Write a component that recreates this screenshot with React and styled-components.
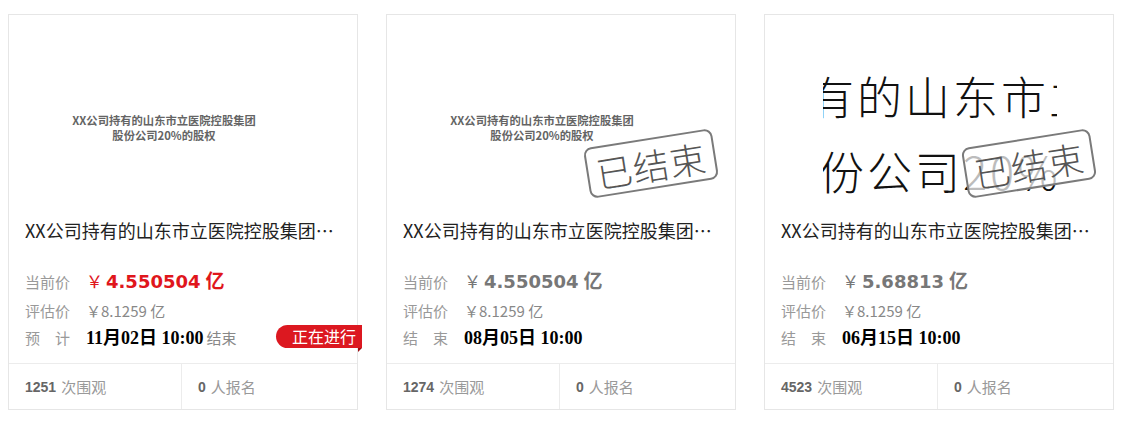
import React from "react";
import styled, { createGlobalStyle } from "styled-components";

const Global = createGlobalStyle`
  html, body { margin: 0; padding: 0; background: #fff; }
  body { font-family: "Noto Sans CJK SC", "Liberation Sans", sans-serif; }
`;

const Row = styled.div`
  display: flex;
  gap: 28px;
  padding: 14px 8px;
`;

const Card = styled.div`
  position: relative;
  width: 350px;
  height: 396px;
  box-sizing: border-box;
  border: 1px solid #e6e6e6;
  display: flex;
  flex-direction: column;
  background: #fff;
`;

const Thumb = styled.div`
  position: relative;
  height: 186px;
  overflow: hidden;
  display: flex;
  align-items: center;
  justify-content: center;
`;

const ThumbCaption = styled.div`
  margin-right: 38px;
  margin-top: 42px;
  text-align: center;
  font-size: 11.3px;
  line-height: 15px;
  font-weight: 700;
  color: #4a4a4a;
  opacity: 0.85;
`;

const ZoomView = styled.div`
  align-self: stretch;
  margin: 0 auto 0 58px;
  width: 234px;
  flex: none;
  overflow: hidden;
  display: flex;
  flex-direction: column;
  gap: 22px;
  padding-top: 54px;
  box-sizing: border-box;
  font-size: 45px;
  line-height: 53px;
  font-weight: 300;
  color: #111;
  letter-spacing: 3px;
  white-space: nowrap;
`;

const ZoomLine = styled.div`
  margin-left: ${(p) => p.$shift}px;
`;

const Stamp = styled.div`
  position: absolute;
  left: 199px;
  top: 123px;
  width: 126px;
  height: 47px;
  border: 2px solid #7a7a7a;
  border-radius: 8px;
  background: rgba(255, 255, 255, 0.72);
  transform: rotate(-9deg);
  display: flex;
  align-items: center;
  justify-content: center;
  font-size: 36px;
  line-height: 1;
  font-weight: 300;
  color: #555;
  letter-spacing: 1px;
`;

const Body = styled.div`
  padding: 19px 16px 12px;
  flex: 1;
`;

const Title = styled.div`
  font-size: 18px;
  line-height: 24px;
  color: #222;
  white-space: nowrap;
  overflow: hidden;
  text-overflow: ellipsis;
  margin-bottom: 20px;
`;

const Line = styled.div`
  display: flex;
  align-items: baseline;
  height: ${(p) => p.$h}px;
  line-height: ${(p) => p.$h}px;
`;

const Label = styled.span`
  width: 61px;
  flex: none;
  font-size: 15px;
  color: #999;
  white-space: pre;
`;

const Price = styled.span`
  font-size: 18px;
  font-weight: 700;
  color: ${(p) => (p.$live ? "#e0161c" : "#777")};
  font-family: "DejaVu Sans", "Noto Sans CJK SC", sans-serif;
`;

const Yen = styled.span`
  font-weight: 400;
  font-size: 17px;
  margin-right: 3px;
  font-family: "Noto Sans CJK SC", sans-serif;
`;

const Unit = styled.span`
  font-family: "Noto Sans CJK SC", sans-serif;
  font-size: 19px;
  margin-left: 5px;
`;

const Estimate = styled.span`
  font-size: 15px;
  color: #888;
`;

const DateText = styled.span`
  font-size: 18px;
  font-weight: 700;
  color: #000;
  font-family: "Liberation Serif", "Noto Sans CJK SC", serif;
`;

const After = styled.span`
  font-size: 15px;
  color: #888;
  margin-left: 3px;
`;

const Badge = styled.div`
  position: absolute;
  right: -5px;
  top: 310px;
  height: 23px;
  padding: 0 6px 0 16px;
  background: #dc1820;
  color: #fff;
  font-size: 16px;
  line-height: 23px;
  border-radius: 12px 0 0 12px;
  &::after {
    content: "";
    position: absolute;
    right: 0;
    bottom: -4px;
    border-top: 4px solid #9e0d12;
    border-right: 4px solid transparent;
  }
`;

const Footer = styled.div`
  display: grid;
  grid-template-columns: 172px 1fr;
  height: 45px;
  border-top: 1px solid #ececec;
`;

const Cell = styled.div`
  display: flex;
  align-items: center;
  padding-left: 16px;
  font-size: 15px;
  color: #999;
  & + & {
    border-left: 1px solid #ececec;
  }
`;

const Num = styled.b`
  font-family: "Liberation Sans", sans-serif;
  font-size: 14px;
  color: #666;
  margin-right: 5px;
`;

const cards = [
  {
    thumb: "text",
    ended: false,
    price: "4.550504",
    label: "预　计",
    date: "11月02日 10:00",
    after: "结束",
    views: 1251,
  },
  {
    thumb: "text",
    ended: true,
    price: "4.550504",
    label: "结　束",
    date: "08月05日 10:00",
    views: 1274,
  },
  {
    thumb: "zoom",
    ended: true,
    price: "5.68813",
    label: "结　束",
    date: "06月15日 10:00",
    views: 4523,
  },
];

function AuctionCard({ c }) {
  return (
    <Card>
      <Thumb>
        {c.thumb === "text" ? (
          <ThumbCaption>
            XX公司持有的山东市立医院控股集团
            <br />
            股份公司20%的股权
          </ThumbCaption>
        ) : (
          <ZoomView>
            <ZoomLine $shift={-14}>有的山东市立医</ZoomLine>
            <ZoomLine $shift={-4}>份公司20%</ZoomLine>
          </ZoomView>
        )}
        {c.ended && <Stamp>已结束</Stamp>}
      </Thumb>
      <Body>
        <Title>XX公司持有的山东市立医院控股集团股份公司20%的股权</Title>
        <Line $h={35}>
          <Label>当前价</Label>
          <Price $live={!c.ended}>
            <Yen>￥</Yen>
            {c.price}
            <Unit>亿</Unit>
          </Price>
        </Line>
        <Line $h={27}>
          <Label>评估价</Label>
          <Estimate>￥8.1259 亿</Estimate>
        </Line>
        <Line $h={27}>
          <Label>{c.label}</Label>
          <DateText>{c.date}</DateText>
          {c.after && <After>{c.after}</After>}
        </Line>
      </Body>
      {!c.ended && <Badge>正在进行</Badge>}
      <Footer>
        <Cell>
          <Num>{c.views}</Num>次围观
        </Cell>
        <Cell>
          <Num>0</Num>人报名
        </Cell>
      </Footer>
    </Card>
  );
}

export default function App() {
  return (
    <>
      <Global />
      <Row>
        {cards.map((c, i) => (
          <AuctionCard key={i} c={c} />
        ))}
      </Row>
    </>
  );
}
